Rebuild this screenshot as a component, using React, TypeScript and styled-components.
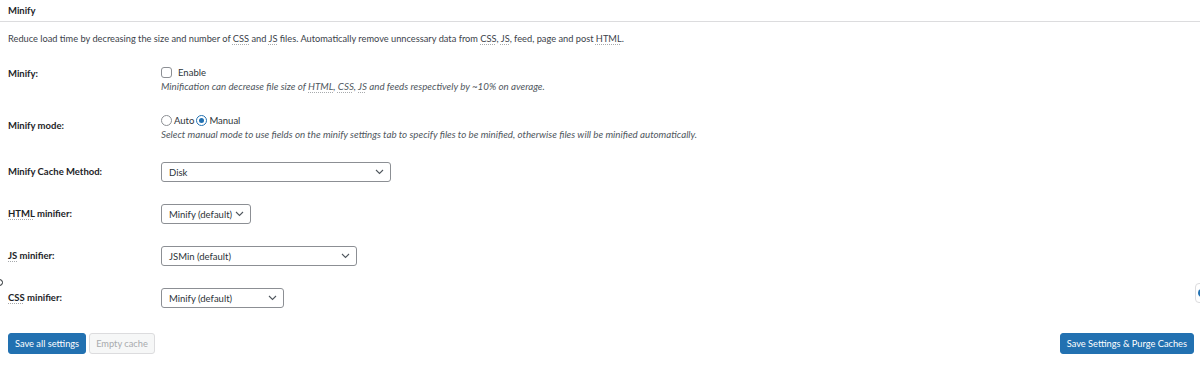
import React from 'react';
import styled, { createGlobalStyle } from 'styled-components';

const GlobalStyle = createGlobalStyle`
  html, body {
    margin: 0;
    padding: 0;
    background: #ffffff;
  }
  body {
    font-family: Lato, "Noto Sans", sans-serif;
    font-size: 9.25px;
    color: #1d2327;
  }
`;

const Page = styled.div`
  position: relative;
  width: 1200px;
  height: 365px;
  overflow: hidden;
  background: #ffffff;
`;

const Header = styled.div`
  height: 22px;
  display: flex;
  align-items: center;
  padding: 0 8px;
  border-bottom: 1px solid #dcdcde;
  box-sizing: border-box;
  font-weight: 700;
  font-size: 9.5px;
  color: #1d2327;
`;

const Intro = styled.p`
  margin: 0;
  padding: 11px 8px 0;
  height: 33px;
  box-sizing: border-box;
  line-height: 12px;
  color: #3c434a;
`;

const Abbr = styled.abbr`
  text-decoration: underline dotted #a7aaad;
  text-underline-offset: 2px;
  cursor: help;
`;

const Table = styled.div`
  padding: 0 8px;
`;

const Row = styled.div`
  display: grid;
  grid-template-columns: 153px 1fr;
  align-items: start;
`;

const Label = styled.div<{ $offset: number }>`
  padding-top: ${(p) => p.$offset}px;
  font-weight: 700;
  font-size: 9.5px;
  line-height: 12px;
  color: #1d2327;
`;

const Cell = styled.div`
  padding: 11px 0;
  display: flex;
  flex-direction: column;
  align-items: flex-start;
`;

const OptionLine = styled.div`
  display: flex;
  align-items: center;
  height: 13px;
  font-size: 9.5px;
  color: #2c3338;
`;

const Hint = styled.div`
  font-style: italic;
  font-size: 9.75px;
  line-height: 12px;
  color: #50575e;
  margin-top: 1px;
  white-space: nowrap;
`;

const Checkbox = styled.span`
  width: 11px;
  height: 11px;
  border: 1px solid #8c8f94;
  border-radius: 3px;
  box-sizing: border-box;
  margin-right: 6px;
`;

const Radio = styled.span<{ $checked?: boolean }>`
  width: 11px;
  height: 11px;
  border-radius: 50%;
  border: 1px solid ${(p) => (p.$checked ? '#2271b1' : '#8c8f94')};
  box-sizing: border-box;
  display: inline-flex;
  align-items: center;
  justify-content: center;
  margin-right: 2px;
  &::after {
    content: '';
    width: 5px;
    height: 5px;
    border-radius: 50%;
    background: ${(p) => (p.$checked ? '#2271b1' : 'transparent')};
  }
`;

const RadioText = styled.span`
  margin-right: 2px;
`;

const Select = styled.div<{ $width: number }>`
  width: ${(p) => p.$width}px;
  height: 20px;
  box-sizing: border-box;
  border: 1px solid #8c8f94;
  border-radius: 3px;
  display: flex;
  align-items: center;
  justify-content: space-between;
  padding: 0 6px 0 7px;
  font-size: 9.5px;
  color: #2c3338;
  background: #fff;
  white-space: nowrap;
`;

const Chevron = () => (
  <svg width="9" height="6" viewBox="0 0 9 6" fill="none">
    <path d="M1 1l3.5 3.5L8 1" stroke="#50575e" strokeWidth="1.1" />
  </svg>
);

const Footer = styled.div`
  display: flex;
  align-items: center;
  justify-content: space-between;
  padding: 14px 6px 0 8px;
`;

const ButtonGroup = styled.div`
  display: flex;
  gap: 3px;
`;

const Button = styled.button<{ $primary?: boolean }>`
  height: 21px;
  padding: 0 6px;
  border-radius: 3px;
  font-family: inherit;
  font-size: 9.25px;
  border: 1px solid ${(p) => (p.$primary ? '#2271b1' : '#dcdcde')};
  background: ${(p) => (p.$primary ? '#2271b1' : '#f6f7f7')};
  color: ${(p) => (p.$primary ? '#ffffff' : '#a7aaad')};
  cursor: ${(p) => (p.$primary ? 'pointer' : 'default')};
`;

const EdgeDot = styled.div`
  position: absolute;
  left: -4px;
  top: 279px;
  width: 7px;
  height: 7px;
  border-radius: 50%;
  border: 1.5px solid #1d2327;
  box-sizing: border-box;
`;

const EdgeTab = styled.div`
  position: absolute;
  right: -8px;
  top: 283px;
  width: 13px;
  height: 20px;
  border: 1px solid #dcdcde;
  border-radius: 4px;
  background: #fff;
  box-sizing: border-box;
  &::after {
    content: '';
    position: absolute;
    left: 2px;
    top: 5px;
    width: 8px;
    height: 8px;
    border-radius: 50%;
    border: 2px solid #2271b1;
    box-sizing: border-box;
  }
`;

const App: React.FC = () => {
  return (
    <Page>
      <GlobalStyle />
      <Header>Minify</Header>
      <Intro>
        Reduce load time by decreasing the size and number of <Abbr>CSS</Abbr> and{' '}
        <Abbr>JS</Abbr> files. Automatically remove unncessary data from <Abbr>CSS</Abbr>,{' '}
        <Abbr>JS</Abbr>, feed, page and post <Abbr>HTML</Abbr>.
      </Intro>
      <Table>
        <Row>
          <Label $offset={13}>Minify:</Label>
          <Cell>
            <OptionLine>
              <Checkbox />
              Enable
            </OptionLine>
            <Hint>
              Minification can decrease file size of <Abbr>HTML</Abbr>, <Abbr>CSS</Abbr>,{' '}
              <Abbr>JS</Abbr> and feeds respectively by ~10% on average.
            </Hint>
          </Cell>
        </Row>
        <Row>
          <Label $offset={17}>Minify mode:</Label>
          <Cell>
            <OptionLine>
              <Radio />
              <RadioText>Auto</RadioText>
              <Radio $checked />
              <RadioText>Manual</RadioText>
            </OptionLine>
            <Hint>
              Select manual mode to use fields on the minify settings tab to specify files to be
              minified, otherwise files will be minified automatically.
            </Hint>
          </Cell>
        </Row>
        <Row>
          <Label $offset={15}>Minify Cache Method:</Label>
          <Cell>
            <Select $width={230}>
              Disk
              <Chevron />
            </Select>
          </Cell>
        </Row>
        <Row>
          <Label $offset={15}>
            <Abbr>HTML</Abbr> minifier:
          </Label>
          <Cell>
            <Select $width={90}>
              Minify (default)
              <Chevron />
            </Select>
          </Cell>
        </Row>
        <Row>
          <Label $offset={15}>
            <Abbr>JS</Abbr> minifier:
          </Label>
          <Cell>
            <Select $width={196}>
              JSMin (default)
              <Chevron />
            </Select>
          </Cell>
        </Row>
        <Row>
          <Label $offset={15}>
            <Abbr>CSS</Abbr> minifier:
          </Label>
          <Cell>
            <Select $width={123}>
              Minify (default)
              <Chevron />
            </Select>
          </Cell>
        </Row>
      </Table>
      <Footer>
        <ButtonGroup>
          <Button $primary>Save all settings</Button>
          <Button disabled>Empty cache</Button>
        </ButtonGroup>
        <Button $primary>Save Settings &amp; Purge Caches</Button>
      </Footer>
      <EdgeDot />
      <EdgeTab />
    </Page>
  );
};

export default App;
